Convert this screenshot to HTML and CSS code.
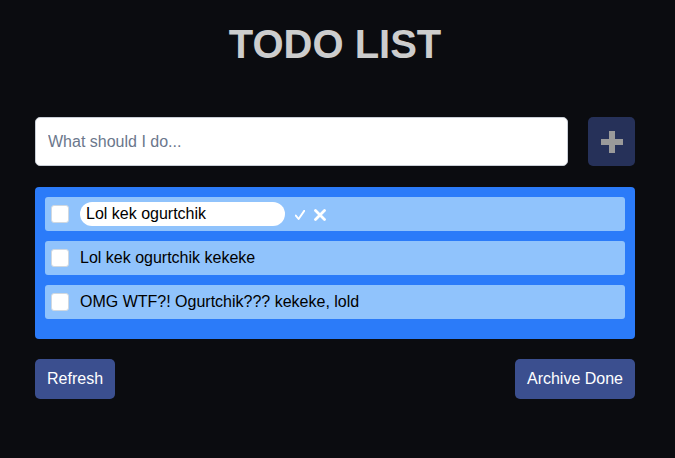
FILE: index.html
```html
<!DOCTYPE html>
<html>
<head>
<meta charset="utf-8">
<link rel="stylesheet" href="styles.css">
</head>
<body>
<main class="app">
  <h1 class="title">TODO LIST</h1>
  <div class="add-row">
    <input class="new-input" type="text" placeholder="What should I do...">
    <button class="add-btn" aria-label="Add">
      <svg width="22" height="22" viewBox="0 0 22 22"><rect x="8" y="0" width="6" height="22" fill="#9a9a9a"/><rect x="0" y="8" width="22" height="6" fill="#9a9a9a"/></svg>
    </button>
  </div>
  <ul class="list">
    <li class="item">
      <span class="check"></span>
      <input class="edit-input" type="text" value="Lol kek ogurtchik">
      <svg class="act ok" width="10" height="10" viewBox="0 0 10 10" aria-label="Save"><path d="M0.8 5.6 L3.6 9 L9.4 0.6" fill="none" stroke="#fff" stroke-width="1.9" stroke-linecap="round" stroke-linejoin="round"/></svg>
      <svg class="act del" width="12" height="12" viewBox="0 0 12 12" aria-label="Cancel"><path d="M1.5 1.5 L10.5 10.5 M10.5 1.5 L1.5 10.5" fill="none" stroke="#fff" stroke-width="2.8" stroke-linecap="round"/></svg>
    </li>
    <li class="item">
      <span class="check"></span>
      <span class="text">Lol kek ogurtchik kekeke</span>
    </li>
    <li class="item">
      <span class="check"></span>
      <span class="text">OMG WTF?! Ogurtchik??? kekeke, lold</span>
    </li>
  </ul>
  <div class="bottom">
    <button class="btn">Refresh</button>
    <button class="btn">Archive Done</button>
  </div>
</main>
</body>
</html>
```

FILE: styles.css
```css
html, body {
  margin: 0;
  padding: 0;
  background: #0b0c10;
  font-family: "Liberation Sans", Arial, sans-serif;
}
.app {
  width: 600px;
  padding: 21px 40px 0 35px;
}
.title {
  margin: 0;
  font-size: 40px;
  line-height: 46px;
  font-weight: bold;
  color: #cdcdcd;
  text-align: center;
}
.add-row {
  margin-top: 50px;
  display: flex;
  gap: 20px;
  align-items: center;
}
.new-input {
  flex: 1;
  height: 49px;
  box-sizing: border-box;
  border: 1px solid #c9ced6;
  border-radius: 5px;
  padding: 0 12px;
  font-family: "Liberation Sans", Arial, sans-serif;
  font-size: 16px;
  color: #222;
  background: #fff;
  outline: none;
}
.new-input::placeholder {
  color: #6b778c;
}
.add-btn {
  width: 47px;
  height: 49px;
  border: none;
  border-radius: 5px;
  background: #263159;
  display: flex;
  align-items: center;
  justify-content: center;
  padding: 0;
}
.add-btn svg { display: block; }
.list {
  list-style: none;
  margin: 21px 0 0;
  padding: 10px 10px 10px;
  background: #2b7bf9;
  border-radius: 4px;
}
.item {
  display: flex;
  align-items: center;
  height: 34px;
  background: #90c3fc;
  border-radius: 3px;
  padding: 0 6px;
  margin-bottom: 10px;
  font-size: 16px;
  color: #000;
}
.check {
  width: 18px;
  height: 18px;
  box-sizing: border-box;
  background: #fff;
  border: 1px solid #d0d8e0;
  border-radius: 3px;
  margin-right: 11px;
  flex: none;
}
.edit-input {
  width: 205px;
  height: 24px;
  box-sizing: border-box;
  border: none;
  border-radius: 12px;
  padding: 0 6px;
  font-family: "Liberation Sans", Arial, sans-serif;
  font-size: 16px;
  color: #000;
  background: #fff;
  outline: none;
  margin-right: 10px;
}
.act {
  display: block;
  flex: none;
}
.act.ok {
  margin-right: 9px;
  margin-top: 2px;
}
.act.del {
  margin-top: 2px;
}
.bottom {
  margin-top: 20px;
  display: flex;
  justify-content: space-between;
}
.btn {
  height: 40px;
  padding: 0 12px;
  border: none;
  border-radius: 5px;
  background: #3b4f8f;
  color: #fff;
  font-family: "Liberation Sans", Arial, sans-serif;
  font-size: 16px;
}
```
